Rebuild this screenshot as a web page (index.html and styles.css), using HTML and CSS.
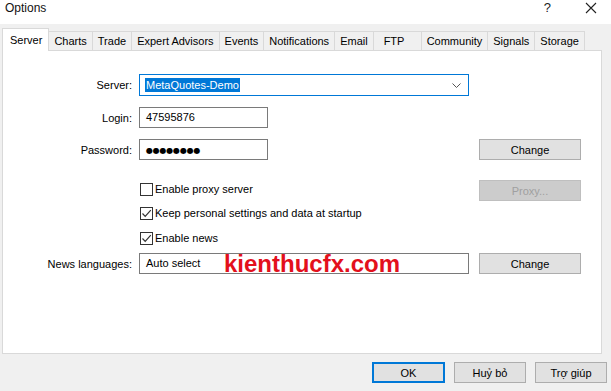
FILE: index.html
```html
<!DOCTYPE html>
<html lang="en">
<head>
    <meta charset="UTF-8">
    <title>Options</title>
    <link rel="stylesheet" href="styles.css">
</head>
<body>
    <div class="titlebar">
        <span class="title">Options</span>
        <span class="help">?</span>
        <svg class="close" width="12" height="12" viewBox="0 0 12 12">
            <path d="M1 1 L11 11 M11 1 L1 11" stroke="#222" stroke-width="1.1" fill="none"/>
        </svg>
    </div>

    <div class="tabs">
        <div class="tab active">Server</div>
        <div class="tab">Charts</div>
        <div class="tab">Trade</div>
        <div class="tab">Expert Advisors</div>
        <div class="tab">Events</div>
        <div class="tab">Notifications</div>
        <div class="tab">Email</div>
        <div class="tab tab-ftp">FTP</div>
        <div class="tab">Community</div>
        <div class="tab">Signals</div>
        <div class="tab">Storage</div>
    </div>

    <div class="panel">
        <div class="form">
            <div class="row row-server">
                <label>Server:</label>
                <div class="combo">
                    <span class="selected">MetaQuotes-Demo</span>
                    <svg class="chevron" width="9" height="5" viewBox="0 0 9 5">
                        <path d="M0.5 0.5 L4.5 4.5 L8.5 0.5" stroke="#555" fill="none"/>
                    </svg>
                </div>
            </div>
            <div class="row row-login">
                <label>Login:</label>
                <div class="input short">47595876</div>
            </div>
            <div class="row row-password">
                <label>Password:</label>
                <div class="input short"><span class="dots">●●●●●●●●</span></div>
                <button class="btn">Change</button>
            </div>
            <div class="row row-proxy">
                <div class="check check-up"><span class="box"></span>Enable proxy server</div>
                <button class="btn disabled">Proxy...</button>
            </div>
            <div class="row row-keep">
                <div class="check">
                    <span class="box"><svg width="11" height="11" viewBox="0 0 11 11"><path d="M1.5 5.5 L4.2 8.3 L9.8 2.2" stroke="#333" stroke-width="1.2" fill="none"/></svg></span>Keep personal settings and data at startup
                </div>
            </div>
            <div class="row row-news">
                <div class="check">
                    <span class="box"><svg width="11" height="11" viewBox="0 0 11 11"><path d="M1.5 5.5 L4.2 8.3 L9.8 2.2" stroke="#333" stroke-width="1.2" fill="none"/></svg></span>Enable news
                </div>
            </div>
            <div class="row row-lang">
                <label>News languages:</label>
                <div class="input wide">Auto select<span class="watermark">kienthucfx.com</span></div>
                <button class="btn">Change</button>
            </div>
        </div>
    </div>

    <div class="footer">
        <button class="btn btn-ok">OK</button>
        <button class="btn btn-foot">Huỷ bỏ</button>
        <button class="btn btn-foot">Trợ giúp</button>
    </div>
</body>
</html>
```

FILE: styles.css
```css
body {
    margin: 0;
    width: 611px;
    height: 391px;
    overflow: hidden;
    background-color: #f0f0f0;
    font-family: "Liberation Sans", Arial, sans-serif;
    font-size: 11px;
    color: #000;
}

.titlebar {
    height: 24px;
    background-color: #fff;
    display: flex;
    align-items: flex-start;
    padding: 1px 0 0 5px;
    box-sizing: border-box;
}

.title {
    font-size: 12px;
    line-height: 14px;
    color: #111;
}

.help {
    margin-left: auto;
    font-size: 13px;
    line-height: 14px;
    color: #222;
}

.close {
    margin: 1px 14px 0 34px;
}

/* tabs */
.tabs {
    display: flex;
    align-items: flex-end;
    height: 26px;
    padding-left: 3px;
}

.tab {
    height: 19px;
    line-height: 18px;
    padding: 0 5px;
    border: 1px solid #d9d9d9;
    border-bottom: none;
    margin-left: -1px;
    box-sizing: border-box;
    background-color: #f0f0f0;
    white-space: nowrap;
}

.tab.active {
    height: 23px;
    line-height: 22px;
    padding: 0 6px 0 7px;
    background-color: #fff;
    position: relative;
    z-index: 1;
    margin-bottom: -1px;
}

.tab-ftp {
    width: 49px;
    padding-left: 10px;
}

.panel {
    width: 600px;
    height: 304px;
    margin-left: 2px;
    border: 1px solid #d9d9d9;
    box-sizing: border-box;
    background-color: #fff;
}

.form {
    padding-top: 23px;
}

.row {
    display: grid;
    grid-template-columns: 129px 333px 102px;
    column-gap: 7px;
    align-items: center;
    height: 21px;
}

.row label {
    text-align: right;
}

.row-server { height: 22px; }
.row-login { margin-top: 11px; }
.row-password { margin-top: 11px; }
.row-proxy { margin-top: 20px; }
.row-keep { margin-top: 2px; height: 20px; }
.row-news { margin-top: 5px; height: 20px; }
.row-lang { margin-top: 5px; }

.combo {
    grid-column: 2;
    width: 330px;
    height: 22px;
    border: 1px solid #0078d7;
    box-sizing: border-box;
    display: flex;
    align-items: center;
    padding-left: 5px;
}

.selected {
    background-color: #0078d7;
    color: #fff;
    line-height: 14px;
    padding: 0 1px;
}

.chevron {
    margin-left: auto;
    margin-right: 7px;
}

.input {
    height: 21px;
    border: 1px solid #7a7a7a;
    box-sizing: border-box;
    line-height: 19px;
    padding-left: 6px;
    position: relative;
}

.input.short { width: 129px; }
.input.wide { width: 330px; }

.dots {
    font-family: "DejaVu Sans", sans-serif;
    font-size: 8px;
    letter-spacing: -0.2px;
}

.watermark {
    position: absolute;
    left: 84px;
    top: -2px;
    font-size: 24px;
    font-weight: bold;
    color: #e3101c;
    line-height: 24px;
    white-space: nowrap;
}

.btn {
    width: 102px;
    height: 21px;
    padding: 0;
    border: 1px solid #adadad;
    background-color: #e1e1e1;
    font-family: "Liberation Sans", Arial, sans-serif;
    font-size: 11px;
    color: #000;
}

.row .btn { grid-column: 3; }

.btn.disabled {
    background-color: #cccccc;
    border-color: #bfbfbf;
    color: #a0a0a0;
}

.check {
    grid-column: 2;
    display: flex;
    align-items: center;
    margin-left: 1px;
}

.check-up {
    margin-top: -3px;
}

.box {
    width: 13px;
    height: 13px;
    border: 1px solid #333;
    box-sizing: border-box;
    background-color: #fff;
    margin-right: 2px;
    display: flex;
    align-items: center;
    justify-content: center;
}

.box svg { display: block; }

.footer {
    display: flex;
    justify-content: flex-end;
    gap: 9px;
    padding: 8px 4px 0 0;
}

.btn-ok {
    width: 73px;
    border: 2px solid #0078d7;
}

.btn-foot {
    width: 72px;
}
```
